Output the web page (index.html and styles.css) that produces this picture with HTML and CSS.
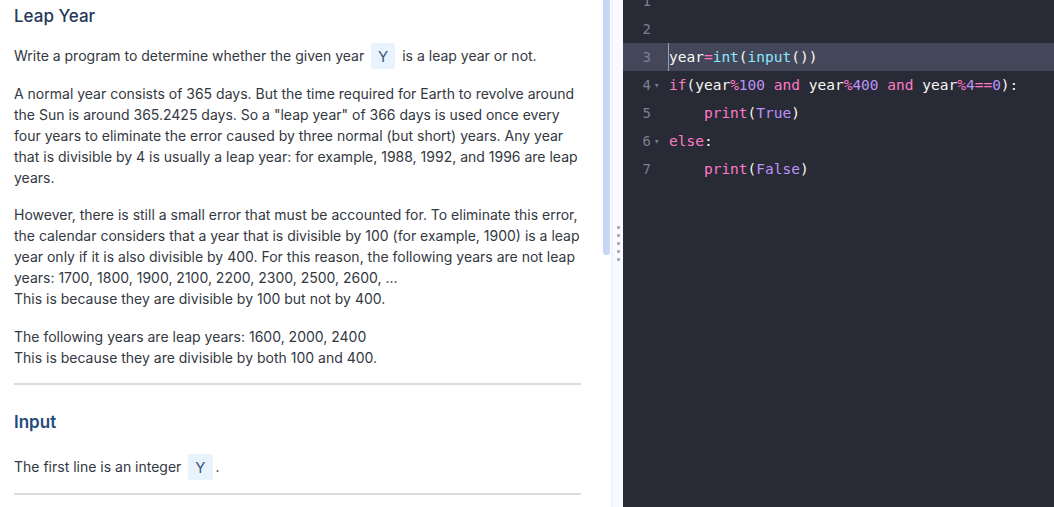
FILE: index.html
```html
<!DOCTYPE html>
<html>
<head>
<meta charset="utf-8">
<link rel="stylesheet" href="styles.css">
</head>
<body>
<div class="app">
  <div class="problem">
    <h1 class="title">Leap Year</h1>
    <p>Write a program to determine whether the given year <span class="code">Y</span> is a leap year or not.</p>
    <p>A normal year consists of 365 days. But the time required for Earth to revolve around the Sun is around 365.2425 days. So a "leap year" of 366 days is used once every four years to eliminate the error caused by three normal (but short) years. Any year that is divisible by 4 is usually a leap year: for example, 1988, 1992, and 1996 are leap years.</p>
    <p>However, there is still a small error that must be accounted for. To eliminate this error, the calendar considers that a year that is divisible by 100 (for example, 1900) is a leap year only if it is also divisible by 400. For this reason, the following years are not leap years: 1700, 1800, 1900, 2100, 2200, 2300, 2500, 2600, ...<br>This is because they are divisible by 100 but not by 400.</p>
    <p>The following years are leap years: 1600, 2000, 2400<br>This is because they are divisible by both 100 and 400.</p>
    <hr class="rule">
    <h2 class="section">Input</h2>
    <p>The first line is an integer <span class="code">Y</span>.</p>
    <hr class="rule">
  </div>
  <div class="scroll"><div class="thumb"></div></div>
  <div class="splitter">
    <div class="grip"><i></i><i></i><i></i><i></i><i></i></div>
  </div>
  <div class="editor">
    <div class="lines">
      <div class="line"><span class="ln">1</span><span class="fold"></span><span class="src"></span></div>
      <div class="line"><span class="ln">2</span><span class="fold"></span><span class="src"></span></div>
      <div class="line active"><span class="ln">3</span><span class="fold"></span><span class="src"><span class="cursor"></span><span class="v">year</span><span class="k">=</span><span class="f">int</span><span class="v">(</span><span class="f">input</span><span class="v">())</span></span></div>
      <div class="line"><span class="ln">4</span><span class="fold">▾</span><span class="src"><span class="k">if</span><span class="v">(year</span><span class="k">%</span><span class="n">100</span> <span class="k">and</span> <span class="v">year</span><span class="k">%</span><span class="n">400</span> <span class="k">and</span> <span class="v">year</span><span class="k">%</span><span class="n">4</span><span class="k">==</span><span class="n">0</span><span class="v">):</span></span></div>
      <div class="line"><span class="ln">5</span><span class="fold"></span><span class="src">    <span class="k">print</span><span class="v">(</span><span class="n">True</span><span class="v">)</span></span></div>
      <div class="line"><span class="ln">6</span><span class="fold">▾</span><span class="src"><span class="k">else</span><span class="v">:</span></span></div>
      <div class="line"><span class="ln">7</span><span class="fold"></span><span class="src">    <span class="k">print</span><span class="v">(</span><span class="n">False</span><span class="v">)</span></span></div>
    </div>
  </div>
</div>
</body>
</html>
```
FILE: styles.css
```css
* { box-sizing: border-box; }
html, body { margin: 0; padding: 0; height: 100%; background: #fff; }
body { overflow: hidden; }
.app { display: flex; height: 507px; }

.problem {
  width: 603px;
  flex: none;
  padding: 5px 22px 0 14px;
  font-family: Inter, "Noto Sans", sans-serif;
  font-size: 14px;
  line-height: 21px;
  color: #333842;
  overflow: hidden;
}
.title {
  margin: 0;
  font-size: 17px;
  line-height: 22px;
  font-weight: 500;
  color: #253858;
}
.problem p { margin: 16px 0 0; }
.problem p:first-of-type { margin-top: 18px; }
.problem p:nth-of-type(2) { margin-top: 17px; }
.problem p:nth-of-type(4) { margin-top: 17px; }
.code {
  background: #e8f3fd;
  color: #3a5a80;
  padding: 3.5px 7px;
  margin: 0 3px;
  font-size: 15px;
  border-radius: 2px;
}
.rule {
  margin: 15px 0 0;
  border: 0;
  height: 2px;
  background: #dcdcdc;
}
.section {
  margin: 26px 0 0;
  font-size: 17px;
  line-height: 22px;
  font-weight: 600;
  color: #1f4b78;
}
.section + p { margin-top: 23px; }
.section + p + .rule { margin-top: 16px; }

.scroll { width: 7px; flex: none; }
.thumb { height: 255px; background: #c7d6f6; border-radius: 0 0 3px 3px; }

.splitter {
  width: 12px;
  flex: none;
  margin-left: 1px;
  background: #f8faff;
  border-left: 2px solid #eef2fb;
  display: flex;
  justify-content: center;
  padding-top: 226px;
}
.grip { display: flex; flex-direction: column; gap: 5px; }
.grip i { display: block; width: 3px; height: 3px; background: #a7a9b0; border-radius: 1px; }

.editor {
  flex: 1;
  background: #282a36;
  overflow: hidden;
  font-family: "DejaVu Sans Mono", "Liberation Mono", monospace;
  font-size: 14.5px;
}
.lines { margin-top: -13px; }
.line { display: flex; height: 28px; line-height: 28px; align-items: center; }
.line.active { background: #44475a; }
.ln { width: 28px; text-align: right; color: #7d8090; font-size: 14px; flex: none; }
.fold { width: 18px; flex: none; color: #7d8090; font-size: 9px; padding-left: 3px; }
.src { white-space: pre; color: #f8f8f2; position: relative; height: 28px; }
.cursor { position: absolute; left: -1px; top: 0; width: 1px; height: 28px; background: #9a9cab; }
.v { color: #f8f8f2; }
.k { color: #ff79c6; }
.f { color: #8be9fd; }
.n { color: #bd93f9; }
```
